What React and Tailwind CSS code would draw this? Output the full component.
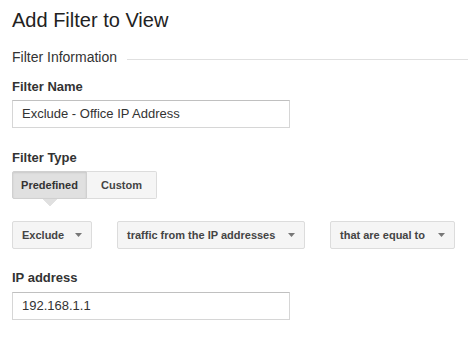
const Caret = () => (
    <svg width="7" height="4" viewBox="0 0 7 4" className="shrink-0">
        <path d="M0 0 L7 0 L3.5 4 Z" fill="#777" />
    </svg>
)

const Dropdown = ({ label, width }) => {
    return (
        <div className={`${width} h-[28px] flex items-center justify-between pl-[9px] pr-[9px] bg-[#f5f5f5] border border-[#dcdcdc] rounded-[2px] text-[11px] font-bold text-[#444]`}>
            <span className="whitespace-nowrap">{label}</span>
            <Caret />
        </div>
    )
}

const App = () => {
    return (
        <div className="w-[468px] h-[338px] bg-white pl-[12px] pt-[8px] overflow-hidden" style={{ fontFamily: '"Liberation Sans", Arial, sans-serif' }}>
            <h1 className="text-[20px] leading-[24px] text-[#222]">Add Filter to View</h1>

            <div className="mt-[16px] flex items-start">
                <span className="text-[14px] leading-[18px] text-[#333] whitespace-nowrap">Filter Information</span>
                <div className="flex-1 h-px bg-[#e0e0e0] mt-[11px] ml-[10px]"></div>
            </div>

            <label className="block mt-[13px] text-[13px] leading-[16px] font-bold text-[#333]">Filter Name</label>
            <div className="mt-[5px] w-[278px] h-[28px] flex items-center px-[9px] border border-[#d6d6d6] border-t-[#c0c0c0] text-[13px] text-[#333]">
                Exclude - Office IP Address
            </div>

            <label className="block mt-[22px] text-[13px] leading-[16px] font-bold text-[#333]">Filter Type</label>
            <div className="mt-[5px] flex">
                <div className="relative w-[75px] h-[28px] flex items-center justify-center bg-[#e0e0e0] border border-[#d0d0d0] rounded-l-[2px] text-[11px] font-bold text-[#333] shadow-[inset_0_1px_2px_rgba(0,0,0,0.1)]">
                    Predefined
                    <svg width="14" height="7" viewBox="0 0 14 7" className="absolute left-[30px] top-[27px]">
                        <path d="M0 0 L14 0 L7 7 Z" fill="#e0e0e0" />
                        <path d="M0 0 L7 7 L14 0" fill="none" stroke="#d8d8d8" strokeWidth="0.6" />
                    </svg>
                </div>
                <div className="w-[70px] h-[28px] flex items-center justify-center bg-[#f5f5f5] border border-l-0 border-[#dcdcdc] rounded-r-[2px] text-[11px] font-bold text-[#444]">
                    Custom
                </div>
            </div>

            <div className="mt-[22px] flex gap-[25px]">
                <Dropdown label="Exclude" width="w-[80px]" />
                <Dropdown label="traffic from the IP addresses" width="w-[188px]" />
                <Dropdown label="that are equal to" width="w-[125px]" />
            </div>

            <label className="block mt-[21px] text-[13px] leading-[16px] font-bold text-[#333]">IP address</label>
            <div className="mt-[6px] w-[278px] h-[28px] flex items-center px-[9px] border border-[#d6d6d6] border-t-[#c0c0c0] text-[13px] text-[#333]">
                192.168.1.1
            </div>
        </div>
    )
}

export default App
